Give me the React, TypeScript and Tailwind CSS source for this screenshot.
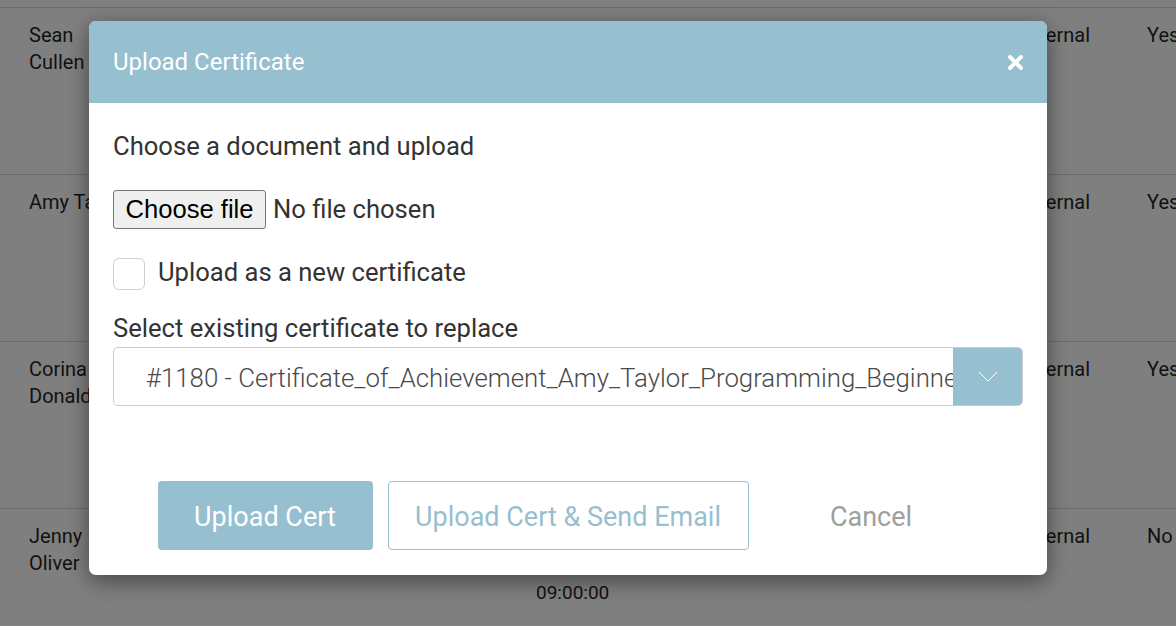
const rows = [
  { first: 'Sean', last: 'Cullen', when: ['', '', ''], kind: 'Internal', flag: 'Yes' },
  { first: 'Amy Taylor', last: '', when: ['', '', ''], kind: 'Internal', flag: 'Yes' },
  { first: 'Corina', last: 'Donaldson', when: ['', '', ''], kind: 'Internal', flag: 'Yes' },
  { first: 'Jenny', last: 'Oliver', when: ['', '', '09:00:00'], kind: 'Internal', flag: 'No' },
];

function BackgroundTable() {
  return (
    <div className="flex flex-col text-[20px] leading-[27px] text-[#111]">
      <div className="h-[8px] border-b border-[#6c6c6c]" />
      {rows.map((row) => (
        <div key={row.first} className="flex h-[167px] border-b border-[#6c6c6c] pt-[14px]">
          <div className="ml-[29px] w-[80px] shrink-0 whitespace-nowrap">
            <div>{row.first}</div>
            <div>{row.last}</div>
          </div>
          <div className="ml-[427px] w-[100px] shrink-0 whitespace-nowrap text-[19px] leading-[28px]">
            {row.when.map((line, i) => (
              <div key={i} className="h-[28px]">
                {line}
              </div>
            ))}
          </div>
          <div className="ml-[364px] w-[90px] shrink-0 whitespace-nowrap text-right">{row.kind}</div>
          <div className="ml-[57px] shrink-0">{row.flag}</div>
        </div>
      ))}
    </div>
  );
}

function CloseIcon() {
  return (
    <svg width="17" height="17" viewBox="0 0 17 17" aria-hidden="true">
      <path d="M3 3 L14 14 M14 3 L3 14" stroke="white" strokeWidth="4" strokeLinecap="round" />
    </svg>
  );
}

function Chevron() {
  return (
    <svg width="20" height="11" viewBox="0 0 20 11" aria-hidden="true">
      <polyline points="1,1 10,10 19,1" fill="none" stroke="white" strokeWidth="1" />
    </svg>
  );
}

function UploadModal() {
  return (
    <div className="absolute left-[89px] top-[21px] flex h-[554px] w-[958px] flex-col overflow-hidden rounded-[7px] bg-white shadow-[0_6px_22px_rgba(0,0,0,0.45)]">
      <div className="flex h-[82px] shrink-0 items-center justify-between bg-[#96bfcf] pl-[24px] pr-[23px]">
        <h2 className="text-[24px] text-white">Upload Certificate</h2>
        <button className="flex items-center">
          <CloseIcon />
        </button>
      </div>

      <div className="flex flex-col px-[24px] text-[#333]">
        <p className="mt-[27px] text-[25.6px] leading-[32px]">Choose a document and upload</p>

        <div className="mt-[28px] flex h-[39px] items-center">
          <button className="h-[39px] w-[153px] rounded-[3px] border border-[#767676] bg-[#efefef] font-['Liberation_Sans',Arial,sans-serif] text-[25.6px] leading-[37px] text-black">
            Choose file
          </button>
          <span className="ml-[7px] text-[25.6px]">No file chosen</span>
        </div>

        <label className="mt-[29px] flex h-[32px] items-center">
          <span className="h-[32px] w-[32px] shrink-0 rounded-[6px] border border-[#cfcfcf] bg-white" />
          <span className="ml-[13px] pb-[4px] text-[25.6px] leading-[30px]">Upload as a new certificate</span>
        </label>

        <p className="mt-[22px] text-[25.6px] leading-[32px]">Select existing certificate to replace</p>

        <div className="mt-[3px] flex h-[59px] overflow-hidden rounded-[5px] border border-[#cccccc]">
          <div className="flex min-w-0 flex-1 items-center overflow-hidden whitespace-nowrap pl-[32px] pt-[3px] text-[25.8px] font-light text-[#4a4a4a]">
            #1180 - Certificate_of_Achievement_Amy_Taylor_Programming_Beginner
          </div>
          <div className="flex w-[69px] shrink-0 items-center justify-center bg-[#96bfcf]">
            <Chevron />
          </div>
        </div>

        <div className="mt-[75px] flex justify-center gap-[15px]">
          <button className="h-[69px] w-[215px] rounded-[4px] bg-[#96bfcf] pt-[4px] text-[27px] text-white">
            Upload Cert
          </button>
          <button className="h-[69px] w-[361px] rounded-[4px] border border-[#96bfcf] bg-white pt-[4px] text-[27px] text-[#96bfcf]">
            Upload Cert &amp; Send Email
          </button>
          <button className="h-[69px] w-[215px] pt-[4px] text-[27px] text-[#9e9e9e]">Cancel</button>
        </div>
      </div>
    </div>
  );
}

export default function App() {
  return (
    <div className="relative h-[626px] w-[1176px] overflow-hidden bg-[#7f7f7f] font-['Roboto',sans-serif]">
      <BackgroundTable />
      <UploadModal />
    </div>
  );
}
